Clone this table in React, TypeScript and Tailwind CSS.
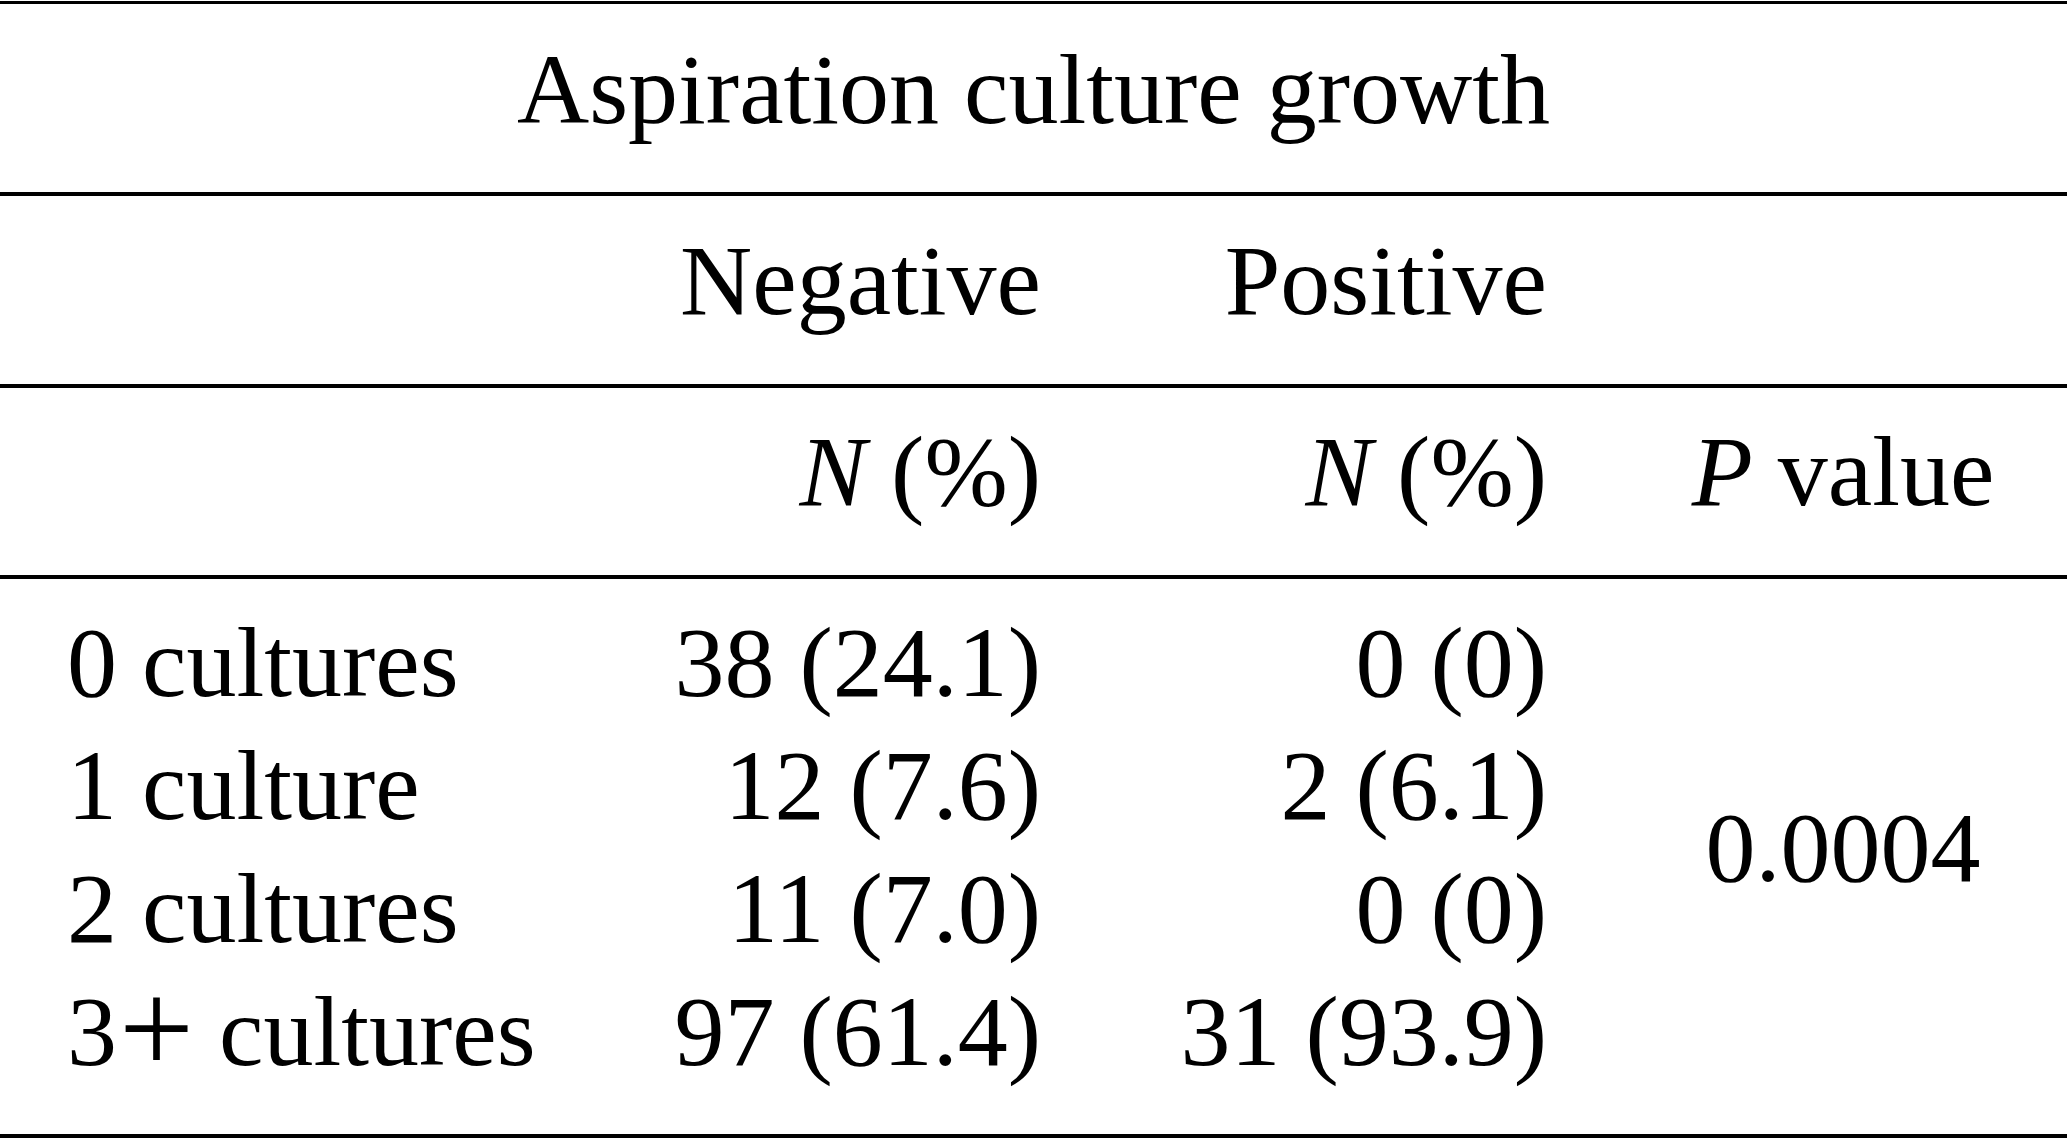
import React from 'react';

type Row = { label: React.ReactNode; neg: string; pos: string };

const rows: Row[] = [
  { label: '0 cultures', neg: '38 (24.1)', pos: '0 (0)' },
  { label: '1 culture', neg: '12 (7.6)', pos: '2 (6.1)' },
  { label: '2 cultures', neg: '11 (7.0)', pos: '0 (0)' },
  {
    label: (
      <>
        3<span className="ml-[2px] text-[133px] leading-[0px] align-[-8px]">+</span> cultures
      </>
    ),
    neg: '97 (61.4)',
    pos: '31 (93.9)',
  },
];

const cols = 'grid grid-cols-[560px_481px_506px_1fr]';

function Rule() {
  return <div className="h-[4px] w-full bg-black" />;
}

export default function App() {
  return (
    <div className="min-h-screen w-full bg-white pt-[1px] font-['Liberation_Serif','Times_New_Roman',serif] text-[100px] leading-[123px] text-black">
      <div className="h-[3px] w-full bg-black" />

      {/* spanning header */}
      <div className="h-[188px] pt-[24px] text-center whitespace-nowrap">Aspiration culture growth</div>
      <Rule />

      <div className={`${cols} h-[188px] pt-[23px] whitespace-nowrap`}>
        <div />
        <div className="text-right">Negative</div>
        <div className="text-right">Positive</div>
        <div />
      </div>
      <Rule />

      <div className={`${cols} h-[187px] pt-[22px] whitespace-nowrap`}>
        <div />
        <div className="text-right">
          <i>N</i> (%)
        </div>
        <div className="text-right">
          <i>N</i> (%)
        </div>
        <div className="pl-[72px] text-center">
          <i>P</i> value
        </div>
      </div>
      <Rule />

      <div className={`${cols} h-[555px] grid-rows-[repeat(4,123px)] content-start pt-[22px] whitespace-nowrap`}>
        {rows.map((r, i) => (
          <React.Fragment key={i}>
            <div className="col-start-1 pl-[67px]" style={{ gridRowStart: i + 1 }}>
              {r.label}
            </div>
            <div className="col-start-2 text-right" style={{ gridRowStart: i + 1 }}>
              {r.neg}
            </div>
            <div className="col-start-3 text-right" style={{ gridRowStart: i + 1 }}>
              {r.pos}
            </div>
          </React.Fragment>
        ))}
        <div className="col-start-4 row-start-1 row-span-4 flex items-center justify-center pl-[72px]">0.0004</div>
      </div>
      <Rule />
    </div>
  );
}
